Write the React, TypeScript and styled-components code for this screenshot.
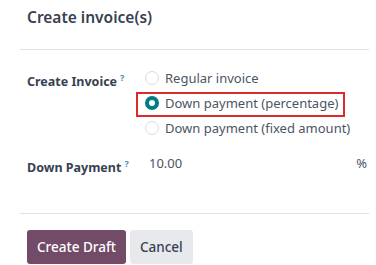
import { styled, createGlobalStyle } from "styled-components";

const GlobalStyle = createGlobalStyle`
    body {
        margin: 0;
        background: #ffffff;
        font-family: "Noto Sans", "Open Sans", sans-serif;
    }
`;

const Dialog = styled.div`
    margin-left: 20px;
    width: 349px;
    height: 265px;
    overflow: hidden;
`;

const Header = styled.div`
    height: 50px;
    padding: 5px 7px 0;
    box-sizing: border-box;
    border-bottom: 1px solid #dee2e6;
`;

const Title = styled.h4`
    margin: 0;
    font-size: 15.5px;
    line-height: 24px;
    font-weight: 600;
    color: #374151;
`;

const Body = styled.div`
    height: 164px;
    padding: 15px 7px 0;
    box-sizing: border-box;
    border-bottom: 1px solid #dee2e6;
`;

const FieldRow = styled.div<{ $gap?: number }>`
    display: grid;
    grid-template-columns: 118px 1fr;
    margin-bottom: ${(p) => p.$gap ?? 0}px;
`;

const Label = styled.div`
    font-size: 12.5px;
    font-weight: 700;
    color: #374151;
    line-height: 25px;
`;

const Help = styled.sup`
    font-size: 9px;
    color: #3d8fc4;
    margin-left: 3px;
    font-weight: 700;
`;

const RadioList = styled.div`
    display: flex;
    flex-direction: column;
    align-items: flex-start;
`;

const Option = styled.label<{ $marked?: boolean }>`
    position: relative;
    display: inline-flex;
    align-items: center;
    gap: 6px;
    height: 25px;
    font-size: 13px;
    color: #4b5563;

    &::after {
        content: "";
        display: ${(p) => (p.$marked ? "block" : "none")};
        position: absolute;
        inset: 2px -7px -2px -9px;
        border: 2px solid #d92b2b;
        pointer-events: none;
    }
`;

const Dot = styled.span<{ $checked?: boolean }>`
    width: 14px;
    height: 14px;
    border-radius: 50%;
    box-sizing: border-box;
    border: ${(p) => (p.$checked ? "4px solid #017e84" : "1px solid #d8dadd")};
    background: #ffffff;
    flex-shrink: 0;
`;

const Value = styled.div`
    display: flex;
    justify-content: space-between;
    font-size: 13px;
    line-height: 25px;
    color: #4b5563;
    padding-left: 4px;
    margin-right: -5px;
`;

const Footer = styled.div`
    display: flex;
    gap: 4px;
    padding: 16px 7px 0;
`;

const Button = styled.button<{ $primary?: boolean }>`
    height: 34px;
    padding: 0 10px;
    border: none;
    border-radius: 3px;
    font-family: inherit;
    font-size: 13.5px;
    font-weight: 500;
    background: ${(p) => (p.$primary ? "#714b67" : "#e7e9ed")};
    color: ${(p) => (p.$primary ? "#ffffff" : "#374151")};
`;

export default function App() {
    return (
        <>
            <GlobalStyle />
            <Dialog>
                <Header>
                    <Title>Create invoice(s)</Title>
                </Header>
                <Body>
                    <FieldRow $gap={11}>
                        <Label>
                            Create Invoice<Help>?</Help>
                        </Label>
                        <RadioList>
                            <Option>
                                <Dot />
                                Regular invoice
                            </Option>
                            <Option $marked>
                                <Dot $checked />
                                Down payment (percentage)
                            </Option>
                            <Option>
                                <Dot />
                                Down payment (fixed amount)
                            </Option>
                        </RadioList>
                    </FieldRow>
                    <FieldRow>
                        <Label>
                            Down Payment<Help>?</Help>
                        </Label>
                        <Value>
                            <span>10.00</span>
                            <span>%</span>
                        </Value>
                    </FieldRow>
                </Body>
                <Footer>
                    <Button $primary>Create Draft</Button>
                    <Button>Cancel</Button>
                </Footer>
            </Dialog>
        </>
    );
}
